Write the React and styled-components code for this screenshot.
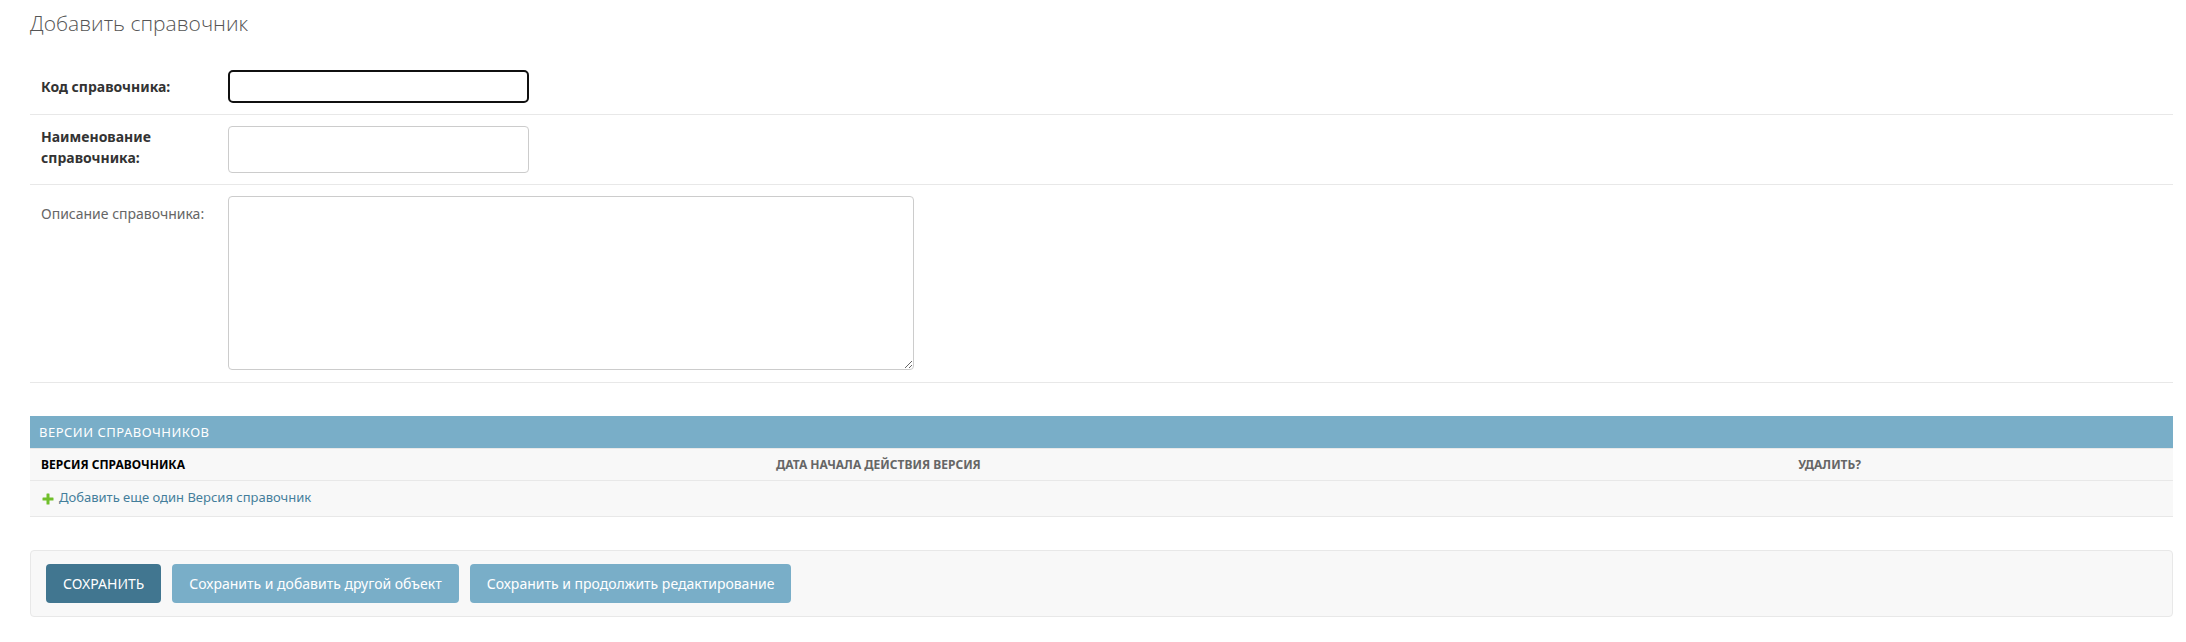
import React from 'react';
import styled, { createGlobalStyle } from 'styled-components';

const GlobalStyle = createGlobalStyle`
  *, *::before, *::after { box-sizing: border-box; }
  body {
    margin: 0;
    background: #fff;
    color: #333;
    font: 14px/21px "Noto Sans", "Open Sans", sans-serif;
  }
`;

const Page = styled.main`
  padding: 9px 13px 24px 30px;
`;

const Title = styled.h1`
  margin: 0 0 25px;
  color: #555;
  font: 300 21px/28px "Open Sans", "Noto Sans", sans-serif;
`;

const FormRow = styled.div`
  display: flex;
  padding: ${({ $first }) => ($first ? '8px' : '11px')} 11px ${({ $tall }) => ($tall ? '12px' : '11px')};
  border-bottom: 1px solid #e8e8e8;
`;

const Label = styled.label`
  flex: 0 0 177px;
  width: 177px;
  margin-right: 10px;
  padding: ${({ $required }) => ($required ? '0 40px 5px 0' : '7px 0 0')};
  color: ${({ $required }) => ($required ? '#333' : '#666')};
  font-weight: ${({ $required }) => ($required ? 700 : 400)};
`;

const FirstLabel = styled(Label)`
  padding: 6px 0;
`;

const TextInput = styled.input`
  width: 301px;
  border: 1px solid #ccc;
  border-radius: 4px;
  padding: 5px 6px;
  background: #fff;
  color: #333;
  font: inherit;

  &:focus {
    outline: none;
    padding: 4px 5px;
    border: 2px solid #101010;
    border-radius: 5px;
  }
`;

const TextArea = styled.textarea`
  width: 686px;
  height: 174px;
  border: 1px solid #ccc;
  border-radius: 4px;
  padding: 5px 6px;
  color: #333;
  font: inherit;
  resize: both;
`;

const Inline = styled.section`
  margin: 33px 0;
  background: #f8f8f8;
`;

const InlineTitle = styled.h2`
  margin: 0;
  padding: 6px 9px;
  background: #79aec8;
  color: #fff;
  font-size: 13px;
  font-weight: 400;
  line-height: 20px;
  letter-spacing: 0.5px;
  text-transform: uppercase;
`;

const Table = styled.table`
  width: 100%;
  table-layout: fixed;
  border-spacing: 0;
`;

const HeadCell = styled.th`
  width: ${({ $width }) => $width};
  padding: 7px 11px;
  border-top: 1px solid #e8e8e8;
  border-bottom: 1px solid #e8e8e8;
  color: ${({ $required }) => ($required ? '#000' : '#666')};
  font-size: 12px;
  font-weight: 700;
  line-height: 17px;
  text-align: left;
  text-transform: uppercase;
`;

const AddCell = styled.td`
  padding: 6px 12px 8px;
  border-bottom: 1px solid #e8e8e8;
`;

const AddLink = styled.a`
  display: inline-flex;
  align-items: center;
  gap: 5px;
  color: #447e9b;
  font-size: 13px;
  line-height: 21px;
  vertical-align: top;
  text-decoration: none;
`;

const PlusIcon = styled.svg`
  width: 12px;
  height: 12px;
  margin-top: 2px;
`;

const SubmitRow = styled.div`
  display: flex;
  gap: 11px;
  padding: 13px 15px;
  border: 1px solid #e8e8e8;
  border-radius: 4px;
  background: #f8f8f8;
`;

const Button = styled.button`
  padding: 9px 17px;
  border: 0;
  border-radius: 4px;
  background: ${({ $primary }) => ($primary ? '#417690' : '#79aec8')};
  color: #fff;
  font: inherit;
  cursor: pointer;
  text-transform: ${({ $primary }) => ($primary ? 'uppercase' : 'none')};
`;

export default function App() {
  return (
    <Page>
      <GlobalStyle />
      <Title>Добавить справочник</Title>
      <form onSubmit={(event) => event.preventDefault()}>
        <FormRow $first>
          <FirstLabel $required htmlFor="code">Код справочника:</FirstLabel>
          <TextInput id="code" type="text" autoFocus />
        </FormRow>
        <FormRow>
          <Label $required htmlFor="name">Наименование справочника:</Label>
          <TextInput id="name" type="text" />
        </FormRow>
        <FormRow $tall>
          <Label htmlFor="description">Описание справочника:</Label>
          <TextArea id="description" />
        </FormRow>

        <Inline>
          <InlineTitle>Версии справочников</InlineTitle>
          <Table>
            <thead>
              <tr>
                <HeadCell $width="34.3%" $required>Версия справочника</HeadCell>
                <HeadCell $width="47.7%">Дата начала действия версия</HeadCell>
                <HeadCell $width="18%">Удалить?</HeadCell>
              </tr>
            </thead>
            <tbody>
              <tr>
                <AddCell colSpan={3}>
                  <AddLink href="#add">
                    <PlusIcon viewBox="0 0 12 12" aria-hidden="true">
                      <path
                        d="M5 0.5h2a.5.5 0 0 1 .5.5v3.5H11a.5.5 0 0 1 .5.5v2a.5.5 0 0 1-.5.5H7.5V11a.5.5 0 0 1-.5.5H5a.5.5 0 0 1-.5-.5V7.5H1a.5.5 0 0 1-.5-.5V5a.5.5 0 0 1 .5-.5h3.5V1a.5.5 0 0 1 .5-.5z"
                        fill="#70bf2b"
                      />
                    </PlusIcon>
                    Добавить еще один Версия справочник
                  </AddLink>
                </AddCell>
              </tr>
            </tbody>
          </Table>
        </Inline>

        <SubmitRow>
          <Button type="submit" $primary>Сохранить</Button>
          <Button type="submit">Сохранить и добавить другой объект</Button>
          <Button type="submit">Сохранить и продолжить редактирование</Button>
        </SubmitRow>
      </form>
    </Page>
  );
}
